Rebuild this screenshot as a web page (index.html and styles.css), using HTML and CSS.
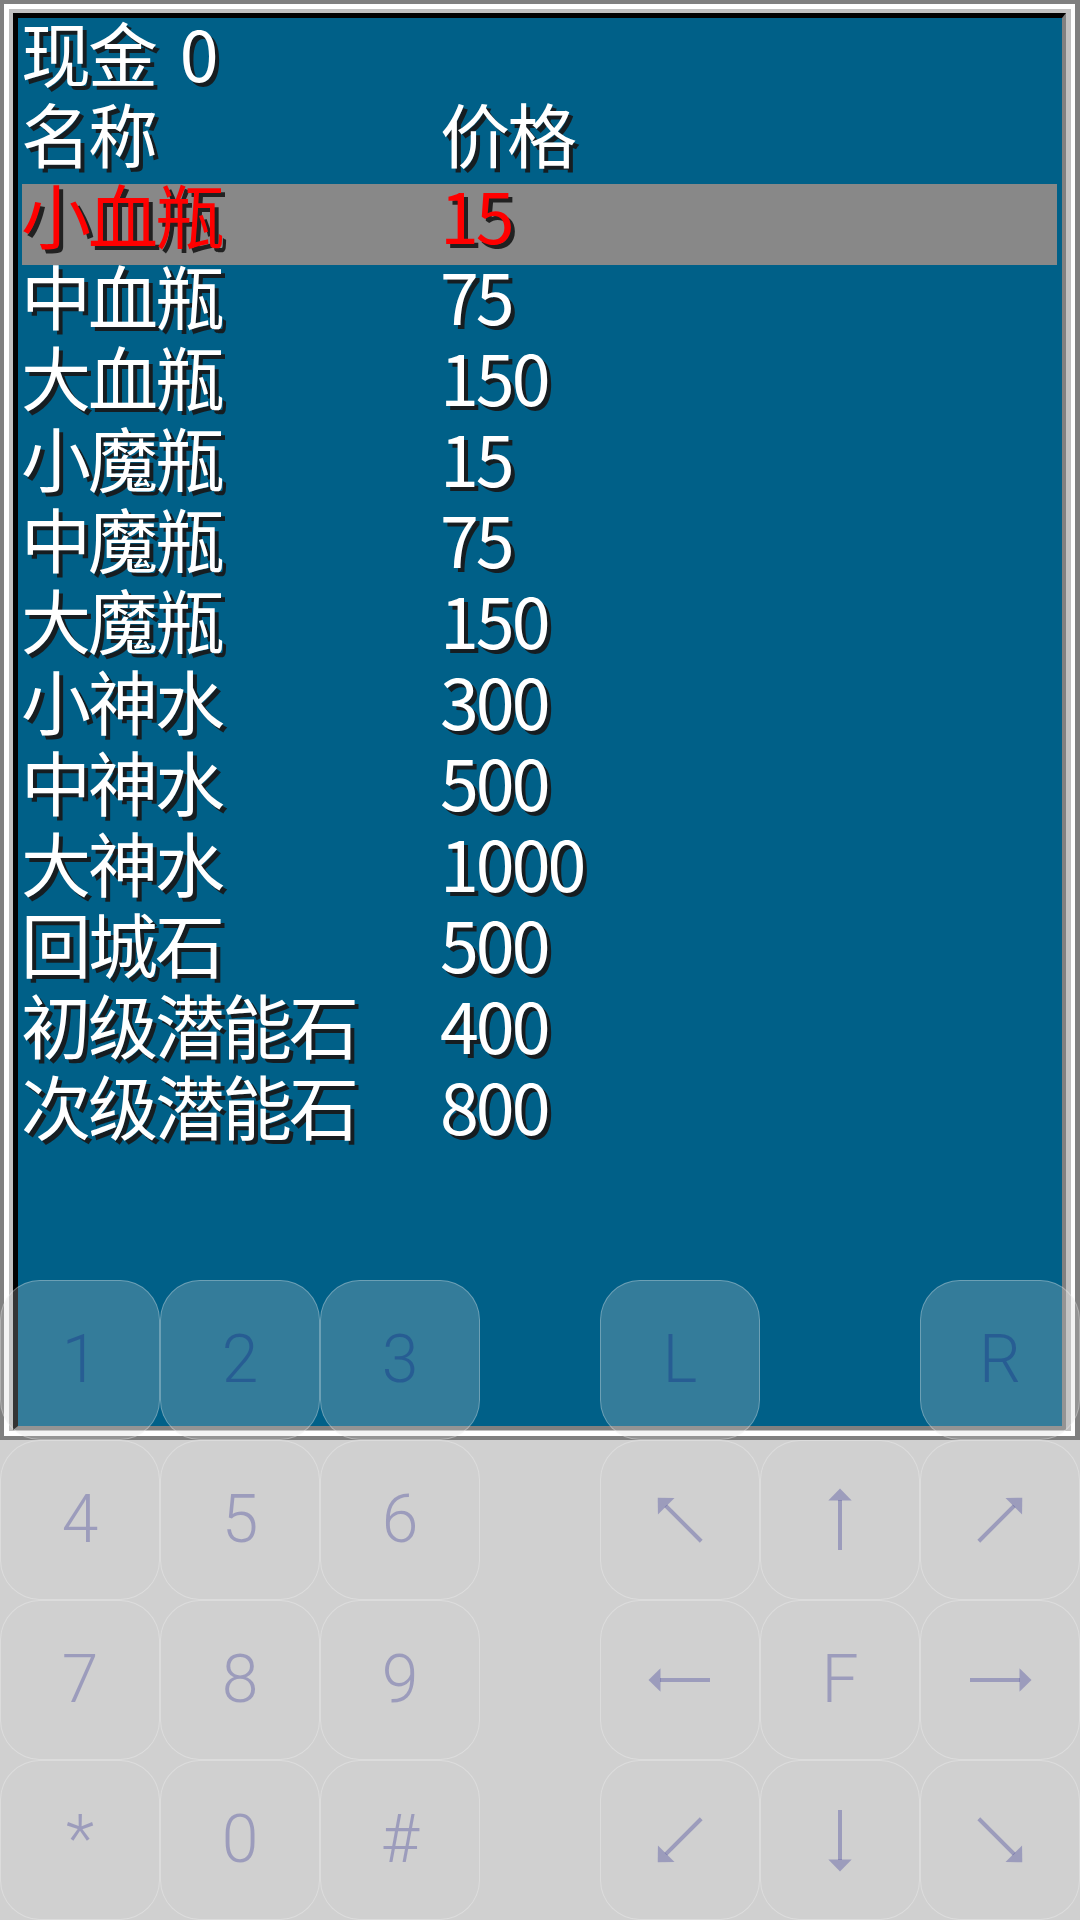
FILE: index.html
```html
<!DOCTYPE html>
<html lang="zh-CN">
<head>
<meta charset="utf-8">
<title>商店</title>
<link rel="stylesheet" href="styles.css">
</head>
<body>
<svg class="defs" width="0" height="0" aria-hidden="true">
  <defs>
    <symbol id="arrow" viewBox="0 0 64 64">
      <path d="M32 0.5 L43.7 12.5 L20.3 12.5 Z" fill="currentColor"/>
      <rect x="30" y="12" width="4" height="50" fill="currentColor"/>
    </symbol>
  </defs>
</svg>
<div class="device">
  <div class="bezel-outer">
    <div class="bezel-inner">
      <div class="screen">
        <div class="row"><span class="cell cash">现金 0</span></div>
        <div class="row"><span class="cell">名称</span><span class="cell">价格</span></div>
        <div class="row selected"><span class="cell">小血瓶</span><span class="cell">15</span></div>
        <div class="row"><span class="cell">中血瓶</span><span class="cell">75</span></div>
        <div class="row"><span class="cell">大血瓶</span><span class="cell">150</span></div>
        <div class="row"><span class="cell">小魔瓶</span><span class="cell">15</span></div>
        <div class="row"><span class="cell">中魔瓶</span><span class="cell">75</span></div>
        <div class="row"><span class="cell">大魔瓶</span><span class="cell">150</span></div>
        <div class="row"><span class="cell">小神水</span><span class="cell">300</span></div>
        <div class="row"><span class="cell">中神水</span><span class="cell">500</span></div>
        <div class="row"><span class="cell">大神水</span><span class="cell">1000</span></div>
        <div class="row"><span class="cell">回城石</span><span class="cell">500</span></div>
        <div class="row"><span class="cell">初级潜能石</span><span class="cell">400</span></div>
        <div class="row"><span class="cell">次级潜能石</span><span class="cell">800</span></div>
      </div>
    </div>
  </div>
</div>
<div class="pad-bg"></div>
<div class="keypad">
  <div class="group">
    <div class="key">1</div><div class="key">2</div><div class="key">3</div>
    <div class="key">4</div><div class="key">5</div><div class="key">6</div>
    <div class="key">7</div><div class="key">8</div><div class="key">9</div>
    <div class="key">*</div><div class="key">0</div><div class="key">#</div>
  </div>
  <div class="group">
    <div class="key">L</div><div class="empty"></div><div class="key">R</div>
    <div class="key"><svg class="arr r-315"><use href="#arrow"/></svg></div>
    <div class="key"><svg class="arr"><use href="#arrow"/></svg></div>
    <div class="key"><svg class="arr r-45"><use href="#arrow"/></svg></div>
    <div class="key"><svg class="arr r-270"><use href="#arrow"/></svg></div>
    <div class="key">F</div>
    <div class="key"><svg class="arr r-90"><use href="#arrow"/></svg></div>
    <div class="key"><svg class="arr r-225"><use href="#arrow"/></svg></div>
    <div class="key"><svg class="arr r-180"><use href="#arrow"/></svg></div>
    <div class="key"><svg class="arr r-135"><use href="#arrow"/></svg></div>
  </div>
</div>
</body>
</html>
```

FILE: styles.css
```css
* { box-sizing: border-box; }
html, body {
  margin: 0;
  padding: 0;
  width: 1080px;
  height: 1920px;
  overflow: hidden;
  background: #d0d0d0;
}
body { position: relative; }
.defs { position: absolute; width: 0; height: 0; }

.device {
  width: 1080px;
  height: 1440px;
  background: #808080;
  padding: 4px 5px 4px 4px;
}
.bezel-outer {
  height: 100%;
  border-style: solid;
  border-color: #ffffff;
  border-width: 5px 4px 5px 5px;
}
.bezel-inner {
  height: 100%;
  border-style: solid;
  border-color: #c0c0c0;
  border-width: 4px 5px 1px 4px;
}
.screen {
  height: 100%;
  background: #006088;
  border-style: solid;
  border-color: #000000 #808080 #808080 #000000;
  border-width: 5px 4px 4px 5px;
  padding: 4px 5px 0 4px;
  font-family: "Noto Sans CJK SC", "Noto Sans CJK JP", sans-serif;
  font-size: 70px;
  letter-spacing: -3px;
  color: #ffffff;
  text-shadow: 4px 4px 0 rgba(24, 24, 24, 0.92);
}
.row {
  display: grid;
  grid-template-columns: 419px 1fr;
  height: 81px;
  white-space: nowrap;
}
.cell {
  display: block;
  height: 81px;
  line-height: 81px;
  margin: -11px 0 0 -1px;
}
.cash { word-spacing: 12px; }
.row.selected {
  background: #888888;
  color: #ff0000;
}

.pad-bg {
  height: 480px;
  background: #d0d0d0;
}
.keypad {
  position: absolute;
  left: 0;
  bottom: 0;
  width: 1080px;
  height: 640px;
  display: flex;
  justify-content: space-between;
}
.group {
  display: grid;
  grid-template-columns: repeat(3, 160px);
  grid-template-rows: repeat(4, 160px);
}
.key {
  display: flex;
  align-items: center;
  justify-content: center;
  border: 1.5px solid rgba(255, 255, 255, 0.28);
  border-radius: 40px;
  background: rgba(208, 208, 208, 0.25);
  color: rgba(0, 0, 128, 0.25);
  font-family: Roboto, "Liberation Sans", sans-serif;
  font-weight: 300;
  font-size: 66px;
  line-height: 1;
}
.arr {
  width: 64px;
  height: 64px;
  color: rgba(0, 0, 128, 0.25);
}
.r-45 { transform: rotate(45deg); }
.r-90 { transform: rotate(90deg); }
.r-135 { transform: rotate(135deg); }
.r-180 { transform: rotate(180deg); }
.r-225 { transform: rotate(225deg); }
.r-270 { transform: rotate(270deg); }
.r-315 { transform: rotate(315deg); }
```
